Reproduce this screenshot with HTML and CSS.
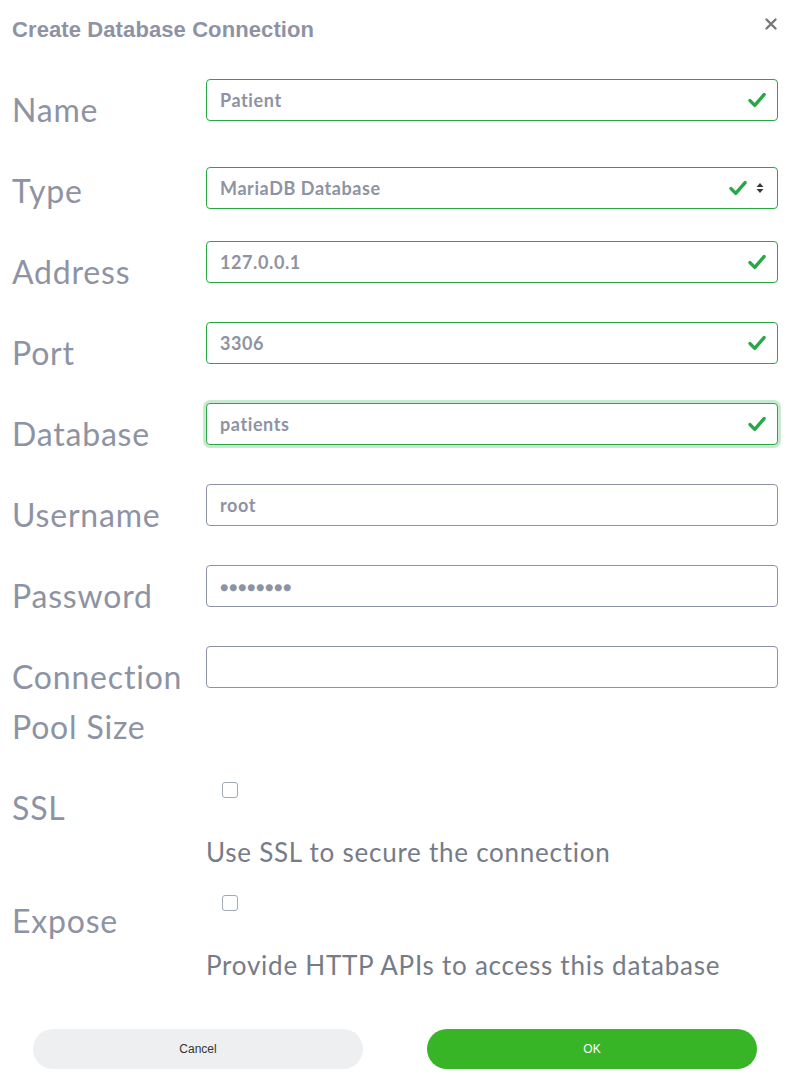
FILE: index.html
```html
<!DOCTYPE html>
<html>
<head>
<meta charset="utf-8">
<link rel="stylesheet" href="styles.css">
</head>
<body>
<div class="dialog">
  <div class="header">
    <h1 class="title">Create Database Connection</h1>
    <svg class="close" viewBox="0 0 12 12"><path d="M1.5 1.5 L10.5 10.5 M10.5 1.5 L1.5 10.5" stroke="#777777" stroke-width="2.4" stroke-linecap="round"/></svg>
  </div>
  <div class="form">
    <div class="row">
      <div class="label">Name</div>
      <div class="field">
        <div class="input valid"><span class="value">Patient</span><svg class="check" viewBox="0 0 16 14"><path d="M1.8 7.5 L6 11.8 L14.3 2.2" fill="none" stroke="#28a745" stroke-width="3" stroke-linecap="round" stroke-linejoin="round"/></svg></div>
      </div>
    </div>
    <div class="row">
      <div class="label">Type</div>
      <div class="field type-field">
        <div class="input valid"><span class="value">MariaDB Database</span><svg class="check" viewBox="0 0 16 14"><path d="M1.8 7.5 L6 11.8 L14.3 2.2" fill="none" stroke="#28a745" stroke-width="3" stroke-linecap="round" stroke-linejoin="round"/></svg><svg class="updown" viewBox="0 0 8 12"><path d="M4 1 L7.5 5 H0.5 Z M4 11 L7.5 7 H0.5 Z" fill="#343a40"/></svg></div>
      </div>
    </div>
    <div class="row">
      <div class="label">Address</div>
      <div class="field">
        <div class="input valid"><span class="value">127.0.0.1</span><svg class="check" viewBox="0 0 16 14"><path d="M1.8 7.5 L6 11.8 L14.3 2.2" fill="none" stroke="#28a745" stroke-width="3" stroke-linecap="round" stroke-linejoin="round"/></svg></div>
      </div>
    </div>
    <div class="row">
      <div class="label">Port</div>
      <div class="field">
        <div class="input valid"><span class="value">3306</span><svg class="check" viewBox="0 0 16 14"><path d="M1.8 7.5 L6 11.8 L14.3 2.2" fill="none" stroke="#28a745" stroke-width="3" stroke-linecap="round" stroke-linejoin="round"/></svg></div>
      </div>
    </div>
    <div class="row">
      <div class="label">Database</div>
      <div class="field">
        <div class="input valid focused"><span class="value">patients</span><svg class="check" viewBox="0 0 16 14"><path d="M1.8 7.5 L6 11.8 L14.3 2.2" fill="none" stroke="#28a745" stroke-width="3" stroke-linecap="round" stroke-linejoin="round"/></svg></div>
      </div>
    </div>
    <div class="row">
      <div class="label">Username</div>
      <div class="field">
        <div class="input"><span class="value">root</span></div>
      </div>
    </div>
    <div class="row">
      <div class="label">Password</div>
      <div class="field">
        <div class="input"><span class="value dots">&#x25CF;&#x25CF;&#x25CF;&#x25CF;&#x25CF;&#x25CF;&#x25CF;&#x25CF;</span></div>
      </div>
    </div>
    <div class="row">
      <div class="label">Connection<br>Pool Size</div>
      <div class="field">
        <div class="input"></div>
      </div>
    </div>
    <div class="row">
      <div class="label">SSL</div>
      <div class="field">
        <span class="checkbox"></span>
        <div class="desc">Use SSL to secure the connection</div>
      </div>
    </div>
    <div class="row">
      <div class="label">Expose</div>
      <div class="field">
        <span class="checkbox"></span>
        <div class="desc">Provide HTTP APIs to access this database</div>
      </div>
    </div>
  </div>
  <div class="footer">
    <button class="btn cancel">Cancel</button>
    <button class="btn ok">OK</button>
  </div>
</div>
</body>
</html>
```
FILE: styles.css
```css
* { box-sizing: border-box; }
html, body { margin: 0; padding: 0; background: #ffffff; }
body { font-family: Lato, "Open Sans", sans-serif; color: #8e93a3; }
.dialog { width: 786px; height: 1078px; position: relative; }
.header { display: flex; justify-content: space-between; align-items: center; padding: 17px 9px 0 12px; height: 42px; }
.title { margin: 0; font-family: "Liberation Sans", Arial, sans-serif; font-weight: bold; font-size: 22px; letter-spacing: 0.1px; color: #8e93a3; }
.close { width: 12px; height: 12px; margin-top: -12px; }
.form { display: flex; flex-direction: column; gap: 25px; padding: 37px 8px 0 12px; }
.row { display: flex; align-items: flex-start; }
.label { width: 194px; flex: none; padding-top: 6px; font-size: 32px; line-height: 50px; letter-spacing: 0.8px; color: #8e93a3; white-space: nowrap; }
.field { flex: 1; display: flex; flex-direction: column; align-items: flex-start; }
.type-field { padding-top: 7px; }
.input { width: 100%; height: 42px; border: 1px solid #8e93a3; border-radius: 4px; display: flex; align-items: center; padding: 0 11px 0 13px; background: #fff; }
.input.valid { border-color: #28a745; }
.input.focused { box-shadow: 0 0 0 3px rgba(40, 167, 69, 0.25); }
.value { flex: 1; font-weight: bold; font-size: 18px; letter-spacing: 0.6px; color: #8e93a3; }
.value.dots { font-size: 14px; letter-spacing: 0.6px; }
.check { width: 18px; height: 16px; flex: none; }
.updown { width: 8px; height: 12px; flex: none; margin-left: 9px; margin-right: 2px; }
.checkbox { width: 16px; height: 16px; border: 1px solid #a3a8b5; border-radius: 3px; margin: 5px 0 0 16px; background: #fff; }
.desc { margin-top: 41px; font-size: 26px; line-height: 26px; letter-spacing: 0.75px; color: #767b88; white-space: nowrap; }
.footer { position: absolute; left: 33px; right: 29px; top: 1029px; display: flex; justify-content: space-between; }
.btn { width: 330px; height: 40px; border: none; border-radius: 20px; font-family: "Liberation Sans", Arial, sans-serif; font-size: 12px; }
.cancel { background: #eeeff1; color: #333; }
.ok { background: #37b526; color: #fff; }
```
